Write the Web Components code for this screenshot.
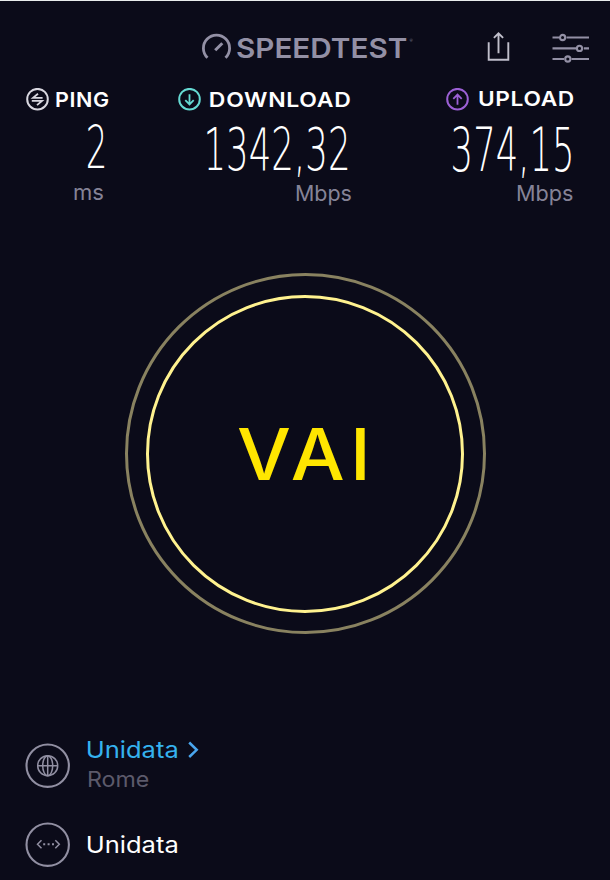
<!DOCTYPE html>
<html lang="it">
<head>
<meta charset="UTF-8">
<title>Speedtest</title>
<style>
    html, body { margin: 0; background: #0b0b19; }
    body { width: 610px; height: 880px; overflow: hidden; }
</style>
</head>
<body>
<speed-app></speed-app>

<script>
// One line of text: the letters fill "width", capitals are "cap" high
class FitText extends HTMLElement {
    constructor() {
        super();
        this.attachShadow({ mode: "open" });
    }
    connectedCallback() {
        const text = this.getAttribute("text");
        const width = Number(this.getAttribute("width"));
        const cap = Number(this.getAttribute("cap"));
        const family = this.getAttribute("family") || "Inter";
        const weight = this.getAttribute("weight") || "400";
        const spacing = Number(this.getAttribute("spacing") || "0");
        const ctx = document.createElement("canvas").getContext("2d");
        ctx.font = `${weight} 100px "${family}", sans-serif`;
        const size = cap * 100 / ctx.measureText("H").actualBoundingBoxAscent;
        ctx.font = `${weight} ${size}px "${family}", sans-serif`;
        const box = ctx.measureText(text);
        const left = box.actualBoundingBoxLeft;
        const ink = left + box.actualBoundingBoxRight + spacing * (text.length - 1);
        const scale = width / ink;
        this.shadowRoot.innerHTML = `
            <style>
                :host { display: block; width: ${width}px; height: ${cap}px; flex: none; }
                svg { display: block; overflow: visible; }
                text {
                    font: ${weight} ${size}px "${family}", sans-serif;
                    letter-spacing: ${spacing}px;
                    fill: currentColor;
                    white-space: pre;
                }
            </style>
            <svg width="${width}" height="${cap}">
                <text transform="translate(${left * scale} ${cap}) scale(${scale} 1)">${text}</text>
            </svg>
        `;
    }
}
customElements.define("fit-text", FitText);

class RingIcon extends HTMLElement {
    constructor() {
        super();
        this.attachShadow({ mode: "open" });
        const shapes = {
            ping: `<path d="M16.6 9.9H7l5-4.2M5.8 12.9h10.2l-5 4.2"/>`,
            down: `<path d="M11.5 6.3v10M7.3 12.2l4.2 4.2 4.2-4.2"/>`,
            up: `<path d="M11.5 16.7v-10M7.3 10.8l4.2-4.2 4.2 4.2"/>`
        };
        this.shadowRoot.innerHTML = `
            <style>
                :host { display: block; width: 23px; height: 23px; flex: none; }
                svg { display: block; fill: none; stroke: currentColor; stroke-width: 1.8; }
            </style>
            <svg width="23" height="23">
                <circle cx="11.5" cy="11.2" r="10.3" stroke-width="2"/>
                ${shapes[this.getAttribute("name")]}
            </svg>
        `;
    }
}
customElements.define("ring-icon", RingIcon);

class SpeedHeader extends HTMLElement {
    constructor() {
        super();
        this.attachShadow({ mode: "open" });
        this.shadowRoot.innerHTML = `
            <style>
                :host {
                    display: flex;
                    align-items: flex-start;
                    height: 86px;
                    box-sizing: border-box;
                    border-top: 1px solid #e9ecec;
                    padding: 30px 0 0 201px;
                    color: #9390a5;
                }
                svg { display: block; flex: none; fill: none; stroke: currentColor; }
                fit-text { margin: 7.2px 0 0 5px; }
                .mark { margin: 8px 0 0 2.5px; font: 4px/4px Lato, sans-serif; width: 4px; }
                .share { margin-left: 72px; color: #c0bfcb; }
                .sliders { margin-left: 41px; }
            </style>
            <svg width="31" height="32" stroke-width="2.8">
                <path d="M6.5 26.8A13.1 13.1 0 1 1 24.5 26.8"/>
                <path d="M14.2 19.2L21.3 12.2" stroke-width="3"/>
            </svg>
            <fit-text text="SPEEDTEST" width="170" cap="20.2" weight="600"></fit-text>
            <span class="mark">®</span>
            <svg class="share" width="24" height="32" stroke-width="1.9">
                <path d="M2.7 11.2V28.7H22.3V11.2M12.5 22.2V2.8M7.9 6.9l4.6-4.6 4.6 4.6"/>
            </svg>
            <svg class="sliders" width="40" height="34" stroke-width="2.1">
                <path d="M1.5 6.5H8M15.5 6.5H38M1.5 17.4H25.3M32.8 17.4H38M1.5 28H13M20.5 28H38"/>
                <circle cx="11.6" cy="6.5" r="2.6"/>
                <circle cx="28.5" cy="17.4" r="2.6"/>
                <circle cx="16.8" cy="28" r="2.6"/>
            </svg>
        `;
    }
}
customElements.define("speed-header", SpeedHeader);

// Title row, value and unit, all against the right edge
class SpeedResult extends HTMLElement {
    constructor() {
        super();
        this.attachShadow({ mode: "open" });
        this.shadowRoot.innerHTML = `
            <style>
                :host { display: flex; flex-direction: column; align-items: flex-end; color: #fff; }
                .title { display: flex; height: 23px; width: 100%; justify-content: space-between; }
                ::slotted([slot="unit"]) { color: #858397; }
            </style>
            <div class="title"><slot name="icon"></slot><slot name="label"></slot></div>
            <slot name="value"></slot>
            <slot name="unit"></slot>
        `;
    }
}
customElements.define("speed-result", SpeedResult);

class GoButton extends HTMLElement {
    constructor() {
        super();
        this.attachShadow({ mode: "open" });
        this.shadowRoot.innerHTML = `
            <style>
                :host {
                    display: grid;
                    place-items: center;
                    box-sizing: border-box;
                    width: 361px;
                    height: 361px;
                    border: 3px solid #898260;
                    border-radius: 50%;
                    color: #ffe600;
                }
                .inner {
                    display: grid;
                    place-items: center;
                    box-sizing: border-box;
                    width: 318px;
                    height: 318px;
                    border: 3px solid #fff28f;
                    border-radius: 50%;
                }
                ::slotted(*) { margin-right: 7px; }
            </style>
            <div class="inner"><slot></slot></div>
        `;
    }
}
customElements.define("go-button", GoButton);

class ConnectionRow extends HTMLElement {
    constructor() {
        super();
        this.attachShadow({ mode: "open" });
        const shapes = {
            globe: `<circle cx="22.7" cy="22.7" r="10"/><ellipse cx="22.7" cy="22.7" rx="5" ry="10"/><path d="M12.7 22.7h20M22.7 12.7v20"/>`,
            code: `<path d="M16.5 18.2l-4 4 4 4M30.3 18.2l4 4-4 4"/><path d="M18.2 22.2h11" stroke-width="2" stroke-dasharray="2 2.4"/>`
        };
        this.shadowRoot.innerHTML = `
            <style>
                :host { display: flex; height: 46px; color: #fff; }
                svg { display: block; flex: none; fill: none; stroke: #918fa2; stroke-width: 1.5; }
                .lines { margin-left: 18px; }
            </style>
            <svg width="45.5" height="46">
                <circle cx="22.7" cy="22.7" r="21.2" stroke-width="2.1"/>
                ${shapes[this.getAttribute("icon")]}
            </svg>
            <div class="lines"><slot></slot></div>
        `;
    }
}
customElements.define("connection-row", ConnectionRow);

class SpeedApp extends HTMLElement {
    constructor() {
        super();
        this.attachShadow({ mode: "open" });
        this.shadowRoot.innerHTML = `
            <style>
                :host { display: block; width: 610px; height: 880px; background: #0b0b19; overflow: hidden; }
                .results { display: flex; align-items: flex-start; padding-left: 25.5px; height: 187px; padding-top: 1.5px; box-sizing: border-box; }
                .ping { width: 84px; }
                .download { width: 173px; margin-left: 68.5px; }
                .upload { width: 128.5px; margin-left: 94.5px; }
                [slot="label"] { margin: 4.5px 0.8px 0 0; }
                .upload [slot="label"] { margin-top: 3px; }
                .ping [slot="value"] { margin: 13.5px 5.5px 0 0; }
                .ping [slot="unit"] { margin: 16.5px 6.5px 0 0; }
                .download [slot="value"] { margin: 15px 4px 0 0; }
                .download [slot="unit"] { margin-top: 15.5px; }
                .upload [slot="value"] { margin: 16.5px 3px 0 0; }
                .upload [slot="unit"] { margin: 14px 1.5px 0 0; }
                go-button { margin: 0 auto 0 124.5px; }
                .network { display: flex; flex-direction: column; gap: 33.5px; padding: 108.7px 0 0 24.8px; }
                .server { display: flex; gap: 10px; color: #35b2ee; margin-top: -1.3px; }
                .server svg { display: block; overflow: visible; }
                .city { color: #5c5a6b; margin-top: 13px; }
                .isp { margin-top: 14px; }
            </style>
            <speed-header></speed-header>
            <div class="results">
                <speed-result class="ping">
                    <ring-icon slot="icon" name="ping" style="color: #d8d7df"></ring-icon>
                    <fit-text slot="label" text="PING" width="53" cap="14.8" weight="600" spacing="0.6"></fit-text>
                    <fit-text slot="value" text="2" width="16" cap="43.5" weight="200" family="DejaVu Sans"></fit-text>
                    <fit-text slot="unit" text="ms" width="29.5" cap="15.8"></fit-text>
                </speed-result>
                <speed-result class="download">
                    <ring-icon slot="icon" name="down" style="color: #65d9d2"></ring-icon>
                    <fit-text slot="label" text="DOWNLOAD" width="140" cap="14.8" weight="600" spacing="0.6"></fit-text>
                    <fit-text slot="value" text="1342,32" width="140" cap="43.5" weight="200" family="DejaVu Sans"></fit-text>
                    <fit-text slot="unit" text="Mbps" width="55.5" cap="15.8"></fit-text>
                </speed-result>
                <speed-result class="upload">
                    <ring-icon slot="icon" name="up" style="color: #9c60d5"></ring-icon>
                    <fit-text slot="label" text="UPLOAD" width="94.5" cap="14.8" weight="600" spacing="0.6"></fit-text>
                    <fit-text slot="value" text="374,15" width="118" cap="43.5" weight="200" family="DejaVu Sans"></fit-text>
                    <fit-text slot="unit" text="Mbps" width="56" cap="15.8"></fit-text>
                </speed-result>
            </div>
            <go-button><fit-text text="VAI" width="127" cap="52" weight="500" spacing="5"></fit-text></go-button>
            <div class="network">
                <connection-row icon="globe">
                    <div class="server">
                        <fit-text text="Unidata" width="89.5" cap="17"></fit-text>
                        <svg width="11" height="17" fill="none" stroke="#4aa6ee" stroke-width="2.5"><path d="M1.2 1.5L8.7 8.8L1.2 16"/></svg>
                    </div>
                    <fit-text class="city" text="Rome" width="60.5" cap="16"></fit-text>
                </connection-row>
                <connection-row icon="code">
                    <fit-text class="isp" text="Unidata" width="89.5" cap="17"></fit-text>
                </connection-row>
            </div>
        `;
    }
}
customElements.define("speed-app", SpeedApp);
</script>
</body>
</html>
